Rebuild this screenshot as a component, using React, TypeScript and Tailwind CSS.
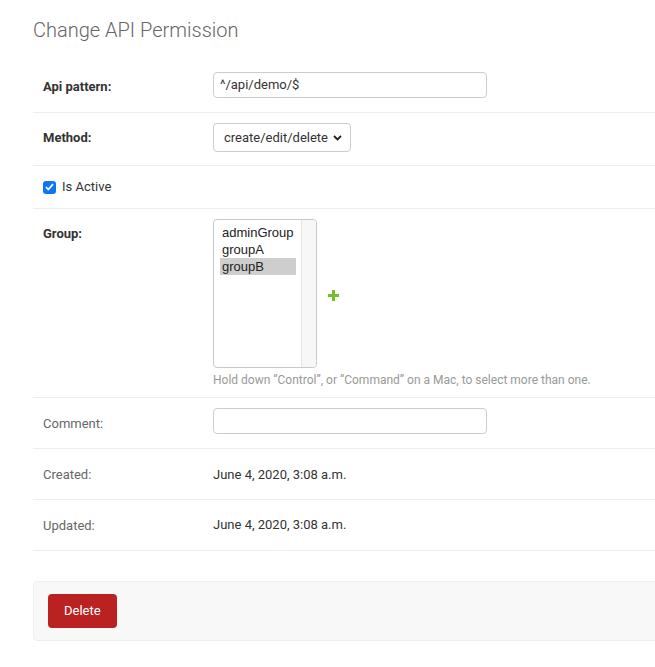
import * as React from "react"

const font = { fontFamily: "Roboto, 'Liberation Sans', sans-serif" }

function Row({
  label,
  required = false,
  className,
  children,
}: {
  label?: string
  required?: boolean
  className: string
  children: React.ReactNode
}) {
  return (
    <div className={`flex border-b border-[#eee] px-[10px] ${className}`}>
      {label !== undefined && (
        <div
          className={`w-[170px] shrink-0 text-[13px] leading-4 ${
            required ? "pt-[7px] font-bold text-[#333]" : "pt-[8px] text-[#666]"
          }`}
        >
          {label}
        </div>
      )}
      {children}
    </div>
  )
}

export default function App() {
  const groups = ["adminGroup", "groupA", "groupB"]

  return (
    <div className="w-[655px] h-[667px] overflow-hidden bg-white" style={font}>
      <div className="w-[720px] pl-[33px] pt-[18px]">
        <h1 className="text-[20px] leading-6 font-light text-[#666] mb-[18px]">
          Change API Permission
        </h1>

        <Row label="Api pattern:" required className="h-[53px] pt-[12px]">
          <div className="w-[274px] h-[26px] border border-[#ccc] rounded-[4px] px-[6px] text-[13px] leading-[24px] text-[#333]">
            ^/api/demo/$
          </div>
        </Row>

        <Row label="Method:" required className="h-[53px] pt-[10px]">
          <div className="w-[138px] h-[29px] border border-[#ccc] rounded-[4px] pl-[10px] pr-[8px] flex items-center justify-between text-[13px] text-[#333]">
            <span>create/edit/delete</span>
            <svg width="9" height="6" viewBox="0 0 9 6" className="mt-[1px]">
              <path d="M1 1l3.5 3.5L8 1" fill="none" stroke="#222" strokeWidth="1.8" />
            </svg>
          </div>
        </Row>

        <Row className="h-[43px] items-center">
          <div className="flex items-center gap-[6px]">
            <div className="w-[13px] h-[13px] rounded-[3px] bg-[#0b75f5] flex items-center justify-center">
              <svg width="9" height="8" viewBox="0 0 9 8">
                <path d="M1 4.2l2.3 2.3L8 1.2" fill="none" stroke="#fff" strokeWidth="1.8" />
              </svg>
            </div>
            <span className="text-[13px] text-[#333] leading-4">Is Active</span>
          </div>
        </Row>

        <Row label="Group:" required className="h-[189px] pt-[10px]">
          <div className="flex flex-col">
            <div className="flex items-center">
              <div className="w-[104px] h-[149px] border border-[#c8c8c8] rounded-[4px] flex overflow-hidden">
                <div
                  className="flex-1 pt-[4px] pl-[6px] pr-[5px] text-[13px] leading-[17px] text-[#222]"
                  style={{ fontFamily: "'Liberation Sans', Arial, sans-serif" }}
                >
                  {groups.map((g) => (
                    <div
                      key={g}
                      className={`pl-[2px] h-[17px] ${g === "groupB" ? "bg-[#cecece]" : ""}`}
                    >
                      {g}
                    </div>
                  ))}
                </div>
                <div className="w-[15px] bg-[#f7f7f7] border-l border-[#e4e4e4]" />
              </div>
              <svg width="11" height="11" viewBox="0 0 11 11" className="ml-[11px] mt-[3px]">
                <path d="M5.5 1.5v8M1.5 5.5h8" stroke="#70bf2b" strokeWidth="3" strokeLinecap="square" />
              </svg>
            </div>
            <div className="mt-[5px] text-[12px] leading-[14px] text-[#999]">
              Hold down “Control”, or “Command” on a Mac, to select more than one.
            </div>
          </div>
        </Row>

        <Row label="Comment:" className="h-[51px] pt-[10px]">
          <div className="w-[274px] h-[26px] border border-[#ccc] rounded-[4px]" />
        </Row>

        <Row label="Created:" className="h-[51px] pt-[10px]">
          <div className="pt-[8px] text-[13px] leading-4 text-[#333]">June 4, 2020, 3:08 a.m.</div>
        </Row>

        <Row label="Updated:" className="h-[51px] pt-[10px]">
          <div className="pt-[7px] text-[13px] leading-4 text-[#333]">June 4, 2020, 3:08 a.m.</div>
        </Row>

        <div className="mt-[30px] h-[60px] border border-[#eee] rounded-[4px] bg-[#f8f8f8] px-[14px] flex items-center">
          <button className="h-[34px] px-[16px] rounded-[4px] bg-[#ba2121] text-white text-[13px]">
            Delete
          </button>
        </div>
      </div>
    </div>
  )
}
